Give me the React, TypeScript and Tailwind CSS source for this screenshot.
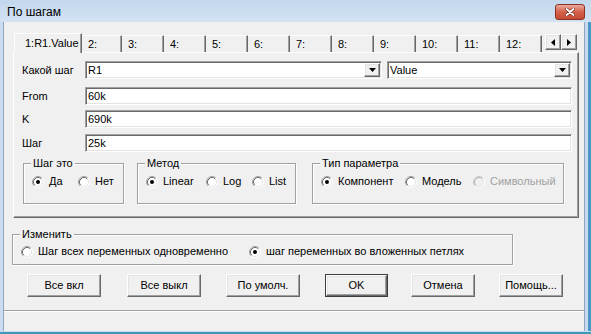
import React from 'react';

const sunken =
    'border border-t-[#a0a0a0] border-l-[#a0a0a0] border-r-white border-b-white shadow-[inset_1px_1px_0_#696969,inset_-1px_-1px_0_#e3e3e3]';
const raised =
    'border border-t-white border-l-white border-r-[#696969] border-b-[#696969] shadow-[inset_-1px_-1px_0_#a0a0a0,inset_1px_1px_0_#e3e3e3]';

function Radio({ checked, disabled }: { checked?: boolean; disabled?: boolean }) {
    return (
        <svg width="12" height="12" viewBox="0 0 12 12" className="shrink-0">
            <circle cx="6" cy="6" r="5" fill={disabled ? '#f0f0f0' : '#fff'} />
            <path d="M2.11 9.89A5.5 5.5 0 0 1 9.89 2.11" fill="none" stroke={disabled ? '#c8c8c8' : '#a0a0a0'} />
            <path d="M9.89 2.11A5.5 5.5 0 0 1 2.11 9.89" fill="none" stroke="#fff" />
            <path d="M2.82 9.18A4.5 4.5 0 0 1 9.18 2.82" fill="none" stroke={disabled ? '#b0b0b0' : '#696969'} />
            <path d="M9.18 2.82A4.5 4.5 0 0 1 2.82 9.18" fill="none" stroke="#e3e3e3" />
            {checked && <circle cx="6" cy="6" r="2" fill="#000" />}
        </svg>
    );
}

function RadioItem({ label, checked, disabled, className }: { label: string; checked?: boolean; disabled?: boolean; className?: string }) {
    return (
        <div className={`flex items-center gap-[5px] ${className ?? ''}`}>
            <Radio checked={checked} disabled={disabled} />
            <span className={disabled ? 'text-[#a0a0a0]' : ''}>{label}</span>
        </div>
    );
}

function Combo({ value, className }: { value: string; className: string }) {
    return (
        <div className={`h-[18px] flex bg-white ${sunken} ${className}`}>
            <span className="flex-1 pl-[2px] self-center">{value}</span>
            <div className={`w-[16px] my-[1px] mr-[1px] flex items-center justify-center bg-[#f0f0f0] ${raised}`}>
                <svg width="7" height="4" viewBox="0 0 7 4">
                    <path d="M0 0h7L3.5 4z" fill="#000" />
                </svg>
            </div>
        </div>
    );
}

function Field({ label, value, className }: { label: string; value: string; className?: string }) {
    return (
        <div className={`flex items-center h-[18px] ${className ?? ''}`}>
            <span className="w-[63px]">{label}</span>
            <div className={`w-[487px] h-[18px] flex items-center pl-[2px] bg-white ${sunken}`}>{value}</div>
        </div>
    );
}

function Group({ title, className, children }: { title: string; className: string; children: React.ReactNode }) {
    return (
        <fieldset className={`border border-[#a0a0a0] shadow-[1px_1px_0_#fff,inset_1px_1px_0_#fff] pl-[8px] ${className}`}>
            <legend className="ml-[-1px] px-[2px] bg-[#f0f0f0]">{title}</legend>
            <div className="flex items-center mt-[5px]">{children}</div>
        </fieldset>
    );
}

function Button({ label, className, isDefault }: { label: string; className: string; isDefault?: boolean }) {
    if (isDefault) {
        return (
            <div className={`h-[23px] border border-[#3c3c3c] flex ${className}`}>
                <div className={`flex-1 flex items-center justify-center bg-[#f0f0f0] ${raised}`}>{label}</div>
            </div>
        );
    }
    return <div className={`h-[23px] flex items-center justify-center bg-[#f0f0f0] ${raised} ${className}`}>{label}</div>;
}

function Arrow({ dir }: { dir: 'l' | 'r' }) {
    return (
        <div className={`w-[16px] h-[16px] flex items-center justify-center bg-[#f0f0f0] ${raised}`}>
            <svg width="4" height="7" viewBox="0 0 4 7">
                <path d={dir === 'l' ? 'M4 0v7L0 3.5z' : 'M0 0v7L4 3.5z'} fill="#000" />
            </svg>
        </div>
    );
}

const tabs = ['2:', '3:', '4:', '5:', '6:', '7:', '8:', '9:', '10:', '11:', '12:'];

export default function App() {
    return (
        <div className="w-[591px] h-[334px] flex flex-col bg-[#c6d9ee] [font-family:'Liberation_Sans',Arial,sans-serif] text-[11px] leading-[13px] text-black select-none">
            {/* title bar */}
            <div className="h-[22px] shrink-0 flex items-start justify-between pl-[7px] pr-[6px] bg-gradient-to-b from-[#c3d7ed] to-[#d3e2f3]">
                <span className="text-[12px] leading-[14px] mt-[5px]">По шагам</span>
                <div className="mt-[4px] w-[30px] h-[16px] rounded-[3px] border border-[#8a3324] bg-gradient-to-b from-[#e9a99c] via-[#d4604b] to-[#c64a32] flex items-center justify-center">
                    <svg width="10" height="8" viewBox="0 0 10 8">
                        <path d="M1.5 1l7 6M8.5 1l-7 6" stroke="#6b2316" strokeWidth="3" strokeLinecap="round" />
                        <path d="M1.5 1l7 6M8.5 1l-7 6" stroke="#fff" strokeWidth="1.8" strokeLinecap="round" />
                    </svg>
                </div>
            </div>

            <div className="flex flex-1 min-h-0">
                <div className="w-[3px] bg-[#cadcf0]" />
                {/* client area */}
                <div className="w-[582px] flex flex-col bg-[#f0f0f0] border-l border-r border-[#8fa5bf]">
                    {/* tabs */}
                    <div className="ml-[9px] mt-[11px] w-[566px] h-[19px] flex items-end">
                        <div className="relative z-10 ml-[1px] mb-[-1px] w-[68px] h-[20px] flex items-center pl-[10px] bg-[#f0f0f0] border-l border-t border-white rounded-tl-[2px] border-r border-r-[#696969] shadow-[inset_-1px_0_0_#a0a0a0]">
                            1:R1.Value
                        </div>
                        {tabs.map((t, i) => (
                            <div
                                key={t}
                                className={`${i === 0 ? 'w-[40px]' : 'w-[42px]'} h-[17px] flex items-center pl-[6px] border-t border-white border-r border-r-[#696969] shadow-[inset_-1px_0_0_#a0a0a0]`}
                            >
                                {t}
                            </div>
                        ))}
                        <div className="ml-[3px] mb-[2px] flex">
                            <Arrow dir="l" />
                            <Arrow dir="r" />
                        </div>
                    </div>

                    {/* tab panel */}
                    <div className="ml-[9px] w-[566px] h-[166px] flex flex-col pt-[8px] pl-[8px] border border-t-white border-l-white border-r-[#696969] border-b-[#696969] shadow-[inset_-1px_-1px_0_#a0a0a0]">
                        <div className="flex items-center h-[18px]">
                            <span className="w-[63px]">Какой шаг</span>
                            <Combo value="R1" className="w-[297px]" />
                            <Combo value="Value" className="ml-[5px] w-[185px]" />
                        </div>
                        <Field label="From" value="60k" className="mt-[8px]" />
                        <Field label="K" value="690k" className="mt-[5px]" />
                        <Field label="Шаг" value="25k" className="mt-[6px]" />

                        <div className="flex mt-[5px] ml-[1px]">
                            <Group title="Шаг это" className="w-[101px] h-[47px]">
                                <RadioItem label="Да" checked className="w-[46px]" />
                                <RadioItem label="Нет" />
                            </Group>
                            <Group title="Метод" className="ml-[13px] w-[159px] h-[47px]">
                                <RadioItem label="Linear" checked className="w-[60px]" />
                                <RadioItem label="Log" className="w-[46px]" />
                                <RadioItem label="List" />
                            </Group>
                            <Group title="Тип параметра" className="ml-[16px] w-[252px] h-[47px]">
                                <RadioItem label="Компонент" checked className="w-[84px]" />
                                <RadioItem label="Модель" className="w-[68px]" />
                                <RadioItem label="Символьный" disabled />
                            </Group>
                        </div>
                    </div>

                    {/* change mode */}
                    <Group title="Изменить" className="mt-[10px] ml-[8px] w-[501px] h-[37px] pl-[7px]">
                        <RadioItem label="Шаг всех переменных одновременно" className="w-[228px] -mt-[1px]" />
                        <RadioItem label="шаг переменных во вложенных петлях" checked className="-mt-[1px]" />
                    </Group>

                    {/* buttons */}
                    <div className="flex mt-[9px] ml-[23px]">
                        <Button label="Все вкл" className="w-[74px]" />
                        <Button label="Все выкл" className="ml-[26px] w-[74px]" />
                        <Button label="По умолч." className="ml-[25px] w-[74px]" />
                        <Button label="OK" isDefault className="ml-[25px] w-[63px]" />
                        <Button label="Отмена" className="ml-[23px] w-[64px]" />
                        <Button label="Помощь..." className="ml-[24px] w-[64px]" />
                    </div>

                    {/* status bar */}
                    <div className="mt-[13px] flex-1 border-t border-[#a0a0a0] shadow-[inset_0_1px_0_#fff]" />
                </div>
                <div className="w-[6px] flex">
                    <div className="w-[3px] bg-[#c7daef]" />
                    <div className="w-[3px] bg-[#4a97c6]" />
                </div>
            </div>
            <div className="h-[3px] shrink-0 flex flex-col">
                <div className="h-[1px] bg-[#c7daef]" />
                <div className="h-[2px] bg-[#3d9ab6]" />
            </div>
        </div>
    );
}
